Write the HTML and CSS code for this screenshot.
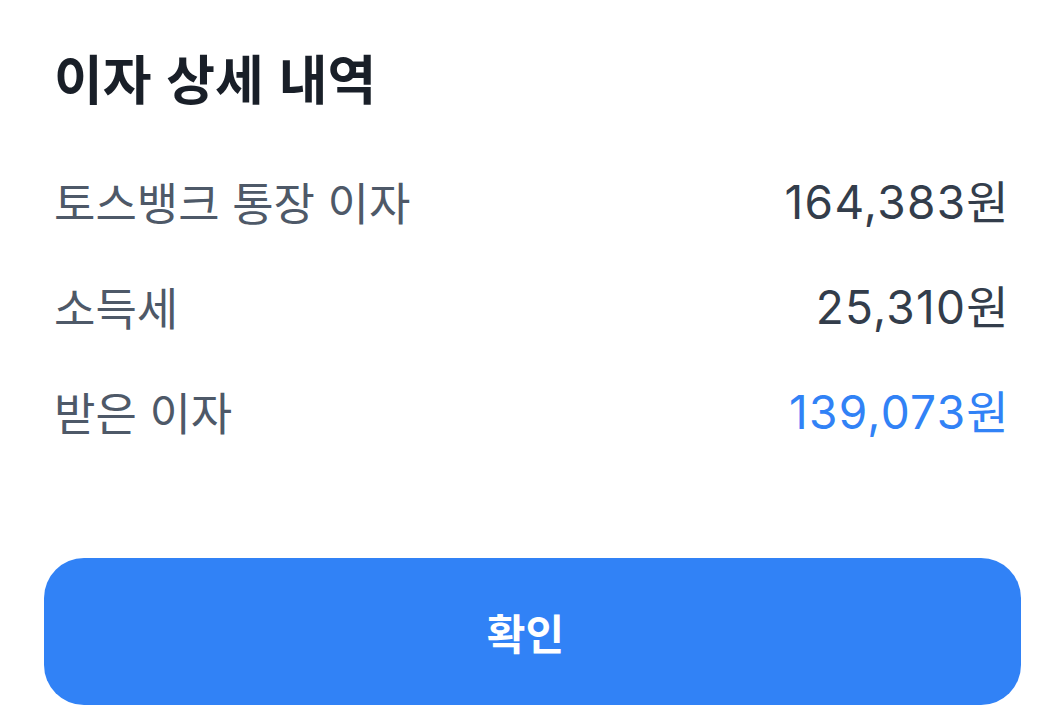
FILE: index.html
```html
<!DOCTYPE html>
<html lang="ko">
<head>
  <meta charset="UTF-8">
  <meta name="viewport" content="width=device-width, initial-scale=1.0">
  <title>이자 상세 내역</title>
  <link rel="stylesheet" href="styles.css">
</head>
<body>
  <div class="sheet">
    <h1 class="sheet-title">이자 상세 내역</h1>

    <ul class="detail-list">
      <li class="detail-row">
        <span class="detail-label">토스뱅크 통장 이자</span>
        <span class="detail-value">164,383원</span>
      </li>
      <li class="detail-row">
        <span class="detail-label">소득세</span>
        <span class="detail-value">25,310원</span>
      </li>
      <li class="detail-row">
        <span class="detail-label">받은 이자</span>
        <span class="detail-value highlight">139,073원</span>
      </li>
    </ul>

    <button class="confirm-btn" type="button">확인</button>
  </div>
</body>
</html>
```

FILE: styles.css
```css
body {
  margin: 0;
  padding: 0;
  background: #fff;
  font-family: "Noto Sans CJK KR", "Noto Sans", sans-serif;
  color: #191f28;
}

.sheet {
  padding: 41px 39px 0 44px;
  display: flex;
  flex-direction: column;
}

.sheet-title {
  margin: 0 0 0 10px;
  font-size: 53px;
  font-weight: 700;
  line-height: 72px;
}

.detail-list {
  list-style: none;
  margin: 58px 0 0 10px;
  padding: 0 12px 0 0;
  display: flex;
  flex-direction: column;
  gap: 43px;
}

.detail-row {
  display: flex;
  justify-content: space-between;
  align-items: center;
  line-height: 62px;
  font-size: 45px;
}

.detail-label {
  color: #4e5968;
}

.detail-value {
  color: #333d4b;
  font-family: "Inter", "Noto Sans CJK KR", sans-serif;
  font-size: 46px;
  letter-spacing: 1.3px;
  margin-right: -1px;
}

.detail-value.highlight {
  color: #3182f6;
}

.confirm-btn {
  margin-top: 115px;
  height: 147px;
  border: none;
  border-radius: 40px;
  background: #3182f6;
  color: #fff;
  font-family: inherit;
  font-size: 42px;
  font-weight: 700;
  padding: 0 14px 0 0;
  cursor: pointer;
}
```
